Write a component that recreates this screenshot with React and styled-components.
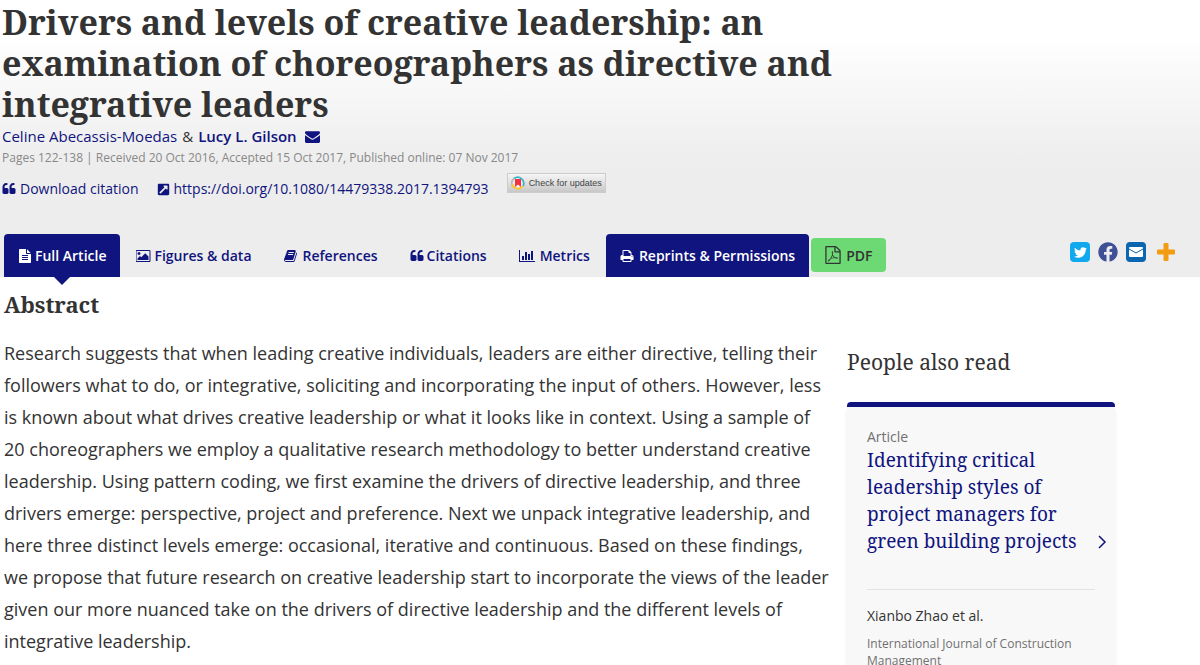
import React from 'react'
import styled, { createGlobalStyle } from 'styled-components'
import { FaExternalLinkSquareAlt, FaFacebook, FaTwitter } from 'react-icons/fa'

const navy = '#10147e'
const serif = "'Noto Serif', 'Droid Serif', 'DejaVu Serif Condensed', 'DejaVu Serif', serif"

const GlobalStyle = createGlobalStyle`
    * {
        box-sizing: border-box;
    }
    body {
        margin: 0;
        background: #fff;
        color: #333;
        font-family: 'Open Sans', sans-serif;
        font-size: 15px;
    }
    h1, h2, h3, p {
        margin: 0;
    }
    a {
        color: ${navy};
        text-decoration: none;
    }
`
const Header = styled.header`
    background: linear-gradient(#fff 0, #fff 36px, #ededed 164px, #ededed 100%);
`
const Intro = styled.div`
    padding: 2px 2px 29px;
`
const Title = styled.h1`
    max-width: 70%;
    font-family: ${serif};
    font-size: 34px;
    line-height: 41px;
    font-weight: 700;
`
const Authors = styled.div`
    display: flex;
    align-items: center;
    gap: 5px;
    line-height: 22px;
`
const Corresponding = styled.a`
    display: flex;
    align-items: center;
    gap: 8px;
    font-weight: 600;
`
const Dates = styled.p`
    color: #888;
    font-size: 12px;
    line-height: 22px;
`
const ArticleLinks = styled.div`
    display: flex;
    align-items: center;
    gap: 18px;
    margin-top: 4px;
    font-size: 14px;
    line-height: 32px;
`
const IconLink = styled.a`
    display: flex;
    align-items: center;
    gap: 4px;
`
const UpdatesButton = styled.button`
    display: flex;
    align-items: center;
    align-self: flex-start;
    gap: 4px;
    height: 20px;
    padding: 0 3px;
    border: 1px solid #ccc;
    background: linear-gradient(#f6f6f6, #c8c8c8);
    color: #444;
    font-family: 'Liberation Sans', sans-serif;
    font-size: 9px;
`
const NavBar = styled.nav`
    display: flex;
    align-items: flex-end;
    padding: 0 22px 0 4px;
`
const Tab = styled.a`
    position: relative;
    display: flex;
    align-items: center;
    gap: ${props => props.$gap || 3}px;
    height: 43px;
    padding: 0 ${props => props.$filled ? 14 : 16}px;
    border-radius: 4px 4px 0 0;
    font-size: 14px;
    font-weight: 600;
    white-space: nowrap;
    background: ${props => props.$filled ? navy : 'transparent'};
    color: ${props => props.$filled ? '#fff' : navy};
`
const Pointer = styled.span`
    position: absolute;
    top: 100%;
    left: 50%;
    margin-left: -8px;
    border: 8px solid transparent;
    border-top-color: ${navy};
    border-bottom: 0;
`
const PdfLink = styled.a`
    display: flex;
    align-items: center;
    gap: 4px;
    height: 34px;
    margin: 0 0 5px 2px;
    padding: 0 13px;
    border-radius: 4px;
    background: #6cd974;
    color: #333;
    font-size: 14px;
    font-weight: 600;
`
const Share = styled.div`
    display: flex;
    align-items: center;
    gap: 8px;
    margin-left: auto;
    height: 36px;
    align-self: flex-start;
`
const ShareButton = styled.button`
    display: flex;
    align-items: center;
    justify-content: center;
    width: ${props => props.$wide ? 24 : 20}px;
    height: 20px;
    padding: 0;
    border: 0;
    border-radius: 4px;
    background: ${props => props.$bg || 'transparent'};
    color: ${props => props.$fg || '#fff'};
`
const Columns = styled.main`
    display: grid;
    grid-template-columns: minmax(0, 1fr) 274px;
    gap: 14px;
    padding: 0 82px 0 4px;
`
const AbstractTitle = styled.h2`
    padding-top: 11px;
    font-family: ${serif};
    font-size: 22px;
    line-height: 32px;
    font-weight: 700;
`
const AbstractText = styled.p`
    margin-top: 17px;
    font-size: 18px;
    line-height: 32px;
`
const SideTitle = styled.h2`
    padding: 69px 3px 24px;
    font-family: ${serif};
    font-size: 21px;
    line-height: 32px;
    font-weight: 400;
`
const Card = styled.article`
    margin: 0 3px;
    border-top: 5px solid ${navy};
    border-radius: 4px 4px 0 0;
    background: #f8f8f8;
    box-shadow: 0 8px 2px 2px #f8f8f8;
    padding: 20px 20px 12px;
`
const Kind = styled.p`
    color: #707070;
    font-size: 14px;
    line-height: 20px;
`
const CardLink = styled.a`
    display: flex;
    align-items: flex-end;
    justify-content: space-between;
    margin-right: -12px;
    line-height: 27px;
`
const CardTitle = styled.h3`
    max-width: 216px;
    font-family: ${serif};
    font-size: 19px;
    font-weight: 400;
`
const CardAuthor = styled.p`
    margin-top: 34px;
    padding-top: 15px;
    border-top: 1px solid #e2e2e2;
    font-size: 14px;
    line-height: 22px;
`
const Journal = styled.p`
    margin-top: 8px;
    color: #707070;
    font-size: 12px;
    line-height: 17px;
`

const paths = {
    quote: 'M832 960v384q0 80-56 136t-136 56h-384q-80 0-136-56t-56-136v-704q0-104 40.5-198.5t109.5-163.5 163.5-109.5 198.5-40.5h64q26 0 45 19t19 45v128q0 26-19 45t-45 19h-64q-106 0-181 75t-75 181v32q0 40 28 68t68 28h224q80 0 136 56t56 136zm896 0v384q0 80-56 136t-136 56h-384q-80 0-136-56t-56-136v-704q0-104 40.5-198.5t109.5-163.5 163.5-109.5 198.5-40.5h64q26 0 45 19t19 45v128q0 26-19 45t-45 19h-64q-106 0-181 75t-75 181v32q0 40 28 68t68 28h224q80 0 136 56t56 136z',
    envelope: 'M1792 710v794q0 66-47 113t-113 47h-1472q-66 0-113-47t-47-113v-794q44 49 101 87 362 246 497 345 57 42 92.5 65.5t94.5 48 110 24.5h2q51 0 110-24.5t94.5-48 92.5-65.5q170-123 498-345 57-39 100-87zm0-294q0 79-49 151t-122 123q-376 261-468 325-10 7-42.5 31t-54 38.5-52 32.5-57.5 27-50 9h-2q-23 0-50-9t-57.5-27-52-32.5-54-38.5-42.5-31q-91-64-262-182.5t-205-142.5q-62-42-117-115.5t-55-136.5q0-78 41.5-130t118.5-52h1472q65 0 112.5 47t47.5 113z',
    file: 'M1596 476q14 14 28 36h-472v-472q22 14 36 28zm-476 164h544v1056q0 40-28 68t-68 28h-1344q-40 0-68-28t-28-68v-1600q0-40 28-68t68-28h800v544q0 40 28 68t68 28zm160 736v-64q0-14-9-23t-23-9h-704q-14 0-23 9t-9 23v64q0 14 9 23t23 9h704q14 0 23-9t9-23zm0-256v-64q0-14-9-23t-23-9h-704q-14 0-23 9t-9 23v64q0 14 9 23t23 9h704q14 0 23-9t9-23zm0-256v-64q0-14-9-23t-23-9h-704q-14 0-23 9t-9 23v64q0 14 9 23t23 9h704q14 0 23-9t9-23z',
    picture: 'M576 576q0 80-56 136t-136 56-136-56-56-136 56-136 136-56 136 56 56 136zm1024 384v448h-1408v-192l320-320 160 160 512-512zm96-704h-1600q-13 0-22.5 9.5t-9.5 22.5v1216q0 13 9.5 22.5t22.5 9.5h1600q13 0 22.5-9.5t9.5-22.5v-1216q0-13-9.5-22.5t-22.5-9.5zm160 32v1216q0 66-47 113t-113 47h-1600q-66 0-113-47t-47-113v-1216q0-66 47-113t113-47h1600q66 0 113 47t47 113z',
    book: 'M1639 478q40 57 18 129l-275 906q-19 64-76.5 107.5t-122.5 43.5h-923q-77 0-148.5-53.5t-99.5-131.5q-24-67-2-127 0-4 3-27t4-37q1-8-3-21.5t-3-19.5q2-11 8-21t16.5-23.5 16.5-23.5q23-38 45-91.5t30-91.5q3-10 .5-30t-.5-28q3-11 17-28t17-23q21-36 42-92t25-90q1-9-2.5-32t.5-28q4-13 22-30.5t22-22.5q19-26 42.5-84.5t27.5-96.5q1-8-3-25.5t-2-26.5q2-8 9-18t18-23 17-21q8-12 16.5-30.5t15-35 16-36 19.5-32 26.5-23.5 36-11.5 47.5 5.5l-1 3q38-9 51-9h761q74 0 114 56t18 130l-274 906q-36 119-71.5 153.5t-128.5 34.5h-869q-27 0-38 15-11 16-1 43 24 70 144 70h923q29 0 56-15.5t35-41.5l300-987q7-22 5-57 38 15 59 43zm-1064 2q-4 13 2 22.5t20 9.5h608q13 0 25.5-9.5t16.5-22.5l21-64q4-13-2-22.5t-20-9.5h-608q-13 0-25.5 9.5t-16.5 22.5zm-83 256q-4 13 2 22.5t20 9.5h608q13 0 25.5-9.5t16.5-22.5l21-64q4-13-2-22.5t-20-9.5h-608q-13 0-25.5 9.5t-16.5 22.5z',
    chart: 'M640 896v512h-256v-512h256zm384-512v1024h-256v-1024h256zm1024 1152v128h-2048v-1536h128v1408h1920zm-640-896v768h-256v-768h256zm384-384v1152h-256v-1152h256z',
    print: 'M448 1536h896v-256h-896v256zm0-640h896v-384h-160q-40 0-68-28t-28-68v-160h-640v640zm1152 64q0-26-19-45t-45-19-45 19-19 45 19 45 45 19 45-19 19-45zm128 0v416q0 13-9.5 22.5t-22.5 9.5h-224v160q0 40-28 68t-68 28h-960q-40 0-68-28t-28-68v-160h-224q-13 0-22.5-9.5t-9.5-22.5v-416q0-79 56.5-135.5t135.5-56.5h64v-544q0-40 28-68t68-28h672q40 0 88 20t76 48l152 152q28 28 48 76t20 88v256h64q79 0 135.5 56.5t56.5 135.5z',
    pdf: 'M1596 380q28 28 48 76t20 88v1152q0 40-28 68t-68 28h-1344q-40 0-68-28t-28-68v-1600q0-40 28-68t68-28h896q40 0 88 20t76 48zm-444-244v376h376q-10-29-22-41l-313-313q-12-12-41-22zm384 1528v-1024h-416q-40 0-68-28t-28-68v-416h-768v1536h1280zm-514-593q33 26 84 56 59-7 117-7 147 0 177 49 16 22 2 52 0 1-1 2l-2 2v1q-6 38-71 38-48 0-115-20t-130-53q-221 24-392 83-153 262-242 262-15 0-28-7l-24-12q-1-1-6-5-10-10-6-36 9-40 56-91.5t132-96.5q14-9 23 6 2 2 2 4 52-85 107-197 68-136 104-262-24-82-30.5-159.5t6.5-127.5q11-40 42-40h22q23 0 35 15 18 21 9 68-2 6-4 8 1 3 1 8v30q-2 123-14 192 55 164 146 238zm-576 411q52-24 137-158-51 40-87.5 84t-49.5 74zm398-920q-15 42-2 132 1-7 7-44 0-3 7-43 1-4 4-8-1-1-1-2-1-2-1-3-1-22-13-36 0 1-1 2v2zm-124 661q135-54 284-81-2-1-13-9.5t-16-13.5q-76-67-127-176-27 86-83 197-30 56-45 83zm646-16q-24-24-140-24 76 28 124 28 14 0 18-1 0-1-2-3z',
}

function Icon({ name, size = 14, box = 1792 }) {
    return (
        <svg width={size * box / 1792} height={size} viewBox={`0 0 ${box} 1792`} fill="currentColor" aria-hidden="true">
            <path d={paths[name]} />
        </svg>
    )
}

function CrossmarkLogo() {
    return (
        <svg width="14" height="14" viewBox="0 0 14 14" aria-hidden="true">
            <circle cx="7" cy="7" r="6" fill="#eee" />
            <path d="M2 11A6 6 0 0 1 3 2.500" fill="none" stroke="#b8b8b8" strokeWidth="1.800" />
            <path d="M3 2.500A6 6 0 0 1 12 10" fill="none" stroke="#3eb1c8" strokeWidth="1.800" />
            <path d="M12 10A6 6 0 0 1 1.300 8" fill="none" stroke="#ffc72c" strokeWidth="1.800" />
            <path d="M4 3h6v8L7 8.500 4 11z" fill="#ef3340" />
        </svg>
    )
}

function App() {
  return (
    <div>
        <GlobalStyle />
        <Header>
            <Intro>
                <Title>Drivers and levels of creative leadership: an examination of choreographers as directive and integrative leaders</Title>
                <Authors>
                    <a href="#celine">Celine Abecassis-Moedas</a>
                    <span>&amp;</span>
                    <Corresponding href="#lucy">Lucy L. Gilson <Icon name="envelope" size={15} /></Corresponding>
                </Authors>
                <Dates>Pages 122-138 | Received 20 Oct 2016, Accepted 15 Oct 2017, Published online: 07 Nov 2017</Dates>
                <ArticleLinks>
                    <IconLink href="#citation"><Icon name="quote" size={14} />Download citation</IconLink>
                    <IconLink href="https://doi.org/10.1080/14479338.2017.1394793">
                        <FaExternalLinkSquareAlt size={13} />https://doi.org/10.1080/14479338.2017.1394793
                    </IconLink>
                    <UpdatesButton type="button"><CrossmarkLogo />Check for updates</UpdatesButton>
                </ArticleLinks>
            </Intro>
            <NavBar>
                <Tab href="#full" $filled><Icon name="file" />Full Article<Pointer /></Tab>
                <Tab href="#figures"><Icon name="picture" box={1920} />Figures &amp; data</Tab>
                <Tab href="#references" $gap={5}><Icon name="book" />References</Tab>
                <Tab href="#citations"><Icon name="quote" />Citations</Tab>
                <Tab href="#metrics" $gap={5}><Icon name="chart" box={2048} />Metrics</Tab>
                <Tab href="#reprints" $filled $gap={5}><Icon name="print" />Reprints &amp; Permissions</Tab>
                <PdfLink href="#pdf"><Icon name="pdf" size={18} />PDF</PdfLink>
                <Share>
                    <ShareButton type="button" aria-label="Twitter" $bg="#10a9ee"><FaTwitter size={13} /></ShareButton>
                    <ShareButton type="button" aria-label="Facebook" $fg="#3f5096"><FaFacebook size={20} /></ShareButton>
                    <ShareButton type="button" aria-label="Email" $bg="#0a66b0">
                        <svg width="14" height="12" viewBox="0 0 14 12" aria-hidden="true">
                            <rect y="1" width="14" height="10" rx="1" fill="#fff" />
                            <path d="M0 3l7 4 7-4" fill="none" stroke="#0a66b0" />
                        </svg>
                    </ShareButton>
                    <ShareButton type="button" aria-label="More" $fg="#f39c12" $wide>
                        <svg width="18" height="18" viewBox="0 0 18 18" fill="currentColor" aria-hidden="true">
                            <rect x="6.500" width="5" height="18" rx="1" />
                            <rect y="6.500" width="18" height="5" rx="1" />
                        </svg>
                    </ShareButton>
                </Share>
            </NavBar>
        </Header>
        <Columns>
            <section>
                <AbstractTitle>Abstract</AbstractTitle>
                <AbstractText>
                    Research suggests that when leading creative individuals, leaders are either directive, telling their followers what to do, or integrative, soliciting and incorporating the input of others. However, less is known about what drives creative leadership or what it looks like in context. Using a sample of 20 choreographers we employ a qualitative research methodology to better understand creative leadership. Using pattern coding, we first examine the drivers of directive leadership, and three drivers emerge: perspective, project and preference. Next we unpack integrative leadership, and here three distinct levels emerge: occasional, iterative and continuous. Based on these findings, we propose that future research on creative leadership start to incorporate the views of the leader given our more nuanced take on the drivers of directive leadership and the different levels of integrative leadership.
                </AbstractText>
            </section>
            <aside>
                <SideTitle>People also read</SideTitle>
                <Card>
                    <Kind>Article</Kind>
                    <CardLink href="#related">
                        <CardTitle>Identifying critical leadership styles of project managers for green building projects</CardTitle>
                        <svg width="10" height="27" viewBox="0 0 10 27" fill="none" stroke={navy} strokeWidth="1.500" aria-hidden="true">
                            <path d="M2 8l6 6-6 6" />
                        </svg>
                    </CardLink>
                    <CardAuthor>Xianbo Zhao et al.</CardAuthor>
                    <Journal>International Journal of Construction Management</Journal>
                </Card>
            </aside>
        </Columns>
    </div>
  )
}

export default App
